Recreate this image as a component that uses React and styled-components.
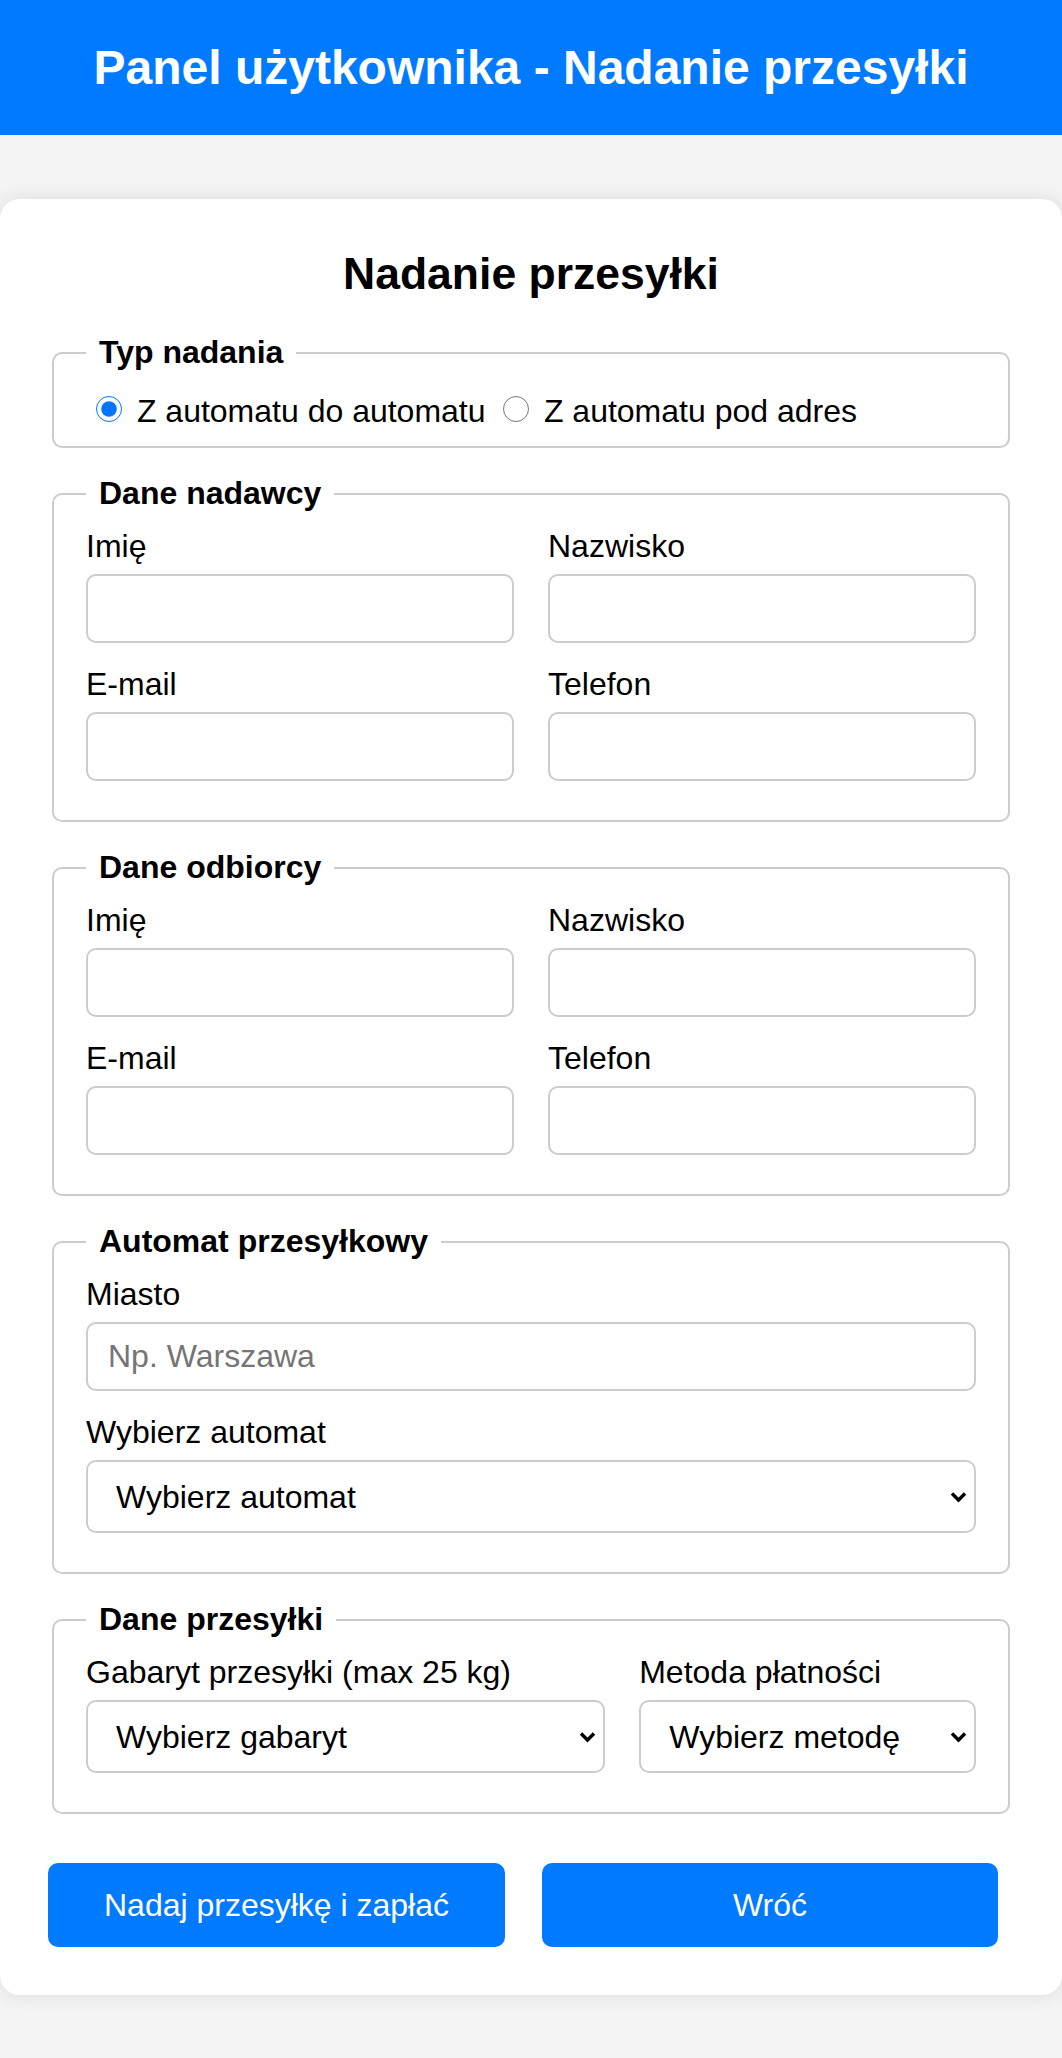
import React from 'react';
import styled, { createGlobalStyle } from 'styled-components';

const GlobalStyle = createGlobalStyle`
  * {
    box-sizing: border-box;
  }

  body {
    margin: 0;
    background: #f4f4f4;
    font-family: 'Liberation Sans', Arial, sans-serif;
    color: #000;
  }
`;

const Header = styled.header`
  background: #007bff;
  color: #fff;
  padding: 40px 0;
  text-align: center;
`;

const HeaderTitle = styled.h1`
  margin: 0;
  font-size: 48px;
  font-weight: bold;
`;

const Card = styled.main`
  margin: 64px 0 65px;
  background: #fff;
  border-radius: 20px;
  box-shadow: 0 0 20px rgba(0, 0, 0, 0.1);
  padding: 50px 52px 48px;
`;

const CardTitle = styled.h2`
  margin: 0 0 35px;
  font-size: 44.5px;
  font-weight: bold;
  text-align: center;
`;

const Fieldset = styled.fieldset`
  margin: 0 0 27px;
  padding: 16px 32px 16px;
  border: 2px solid #ccc;
  border-radius: 10px;
  min-width: 0;
`;

const Legend = styled.legend`
  padding: 0 13px;
  font-size: 32px;
  font-weight: bold;
`;

const RadioLabel = styled.label`
  font-size: 32px;
  margin-right: 3px;
`;

const Radio = styled.input.attrs({ type: 'radio' })`
  width: 26px;
  height: 26px;
  margin: 9px 6px 0 10px;
`;

const Grid = styled.div`
  display: grid;
  grid-template-columns: ${props => props.columns || '1fr 1fr'};
  column-gap: 34px;
`;

const Group = styled.div`
  margin-bottom: 23px;
  min-width: 0;
`;

const Label = styled.label`
  display: block;
  font-size: 32px;
  margin-bottom: 9px;
`;

const Input = styled.input`
  display: block;
  width: 100%;
  height: 69px;
  padding: 14px 20px;
  border: 2px solid #ccc;
  border-radius: 10px;
  font-family: inherit;
  font-size: 32px;
  color: #000;
  background: #fff;

  &::placeholder {
    color: #757575;
  }
`;

const SelectWrap = styled.div`
  position: relative;
`;

const Select = styled.select`
  display: block;
  width: 100%;
  height: 73px;
  padding: 14px 40px 14px 28px;
  border: 2px solid #ccc;
  border-radius: 10px;
  font-family: inherit;
  font-size: 32px;
  color: #000;
  background: #fff;
  appearance: none;
  -webkit-appearance: none;
`;

const Chevron = styled.svg`
  position: absolute;
  right: 9px;
  top: 50%;
  width: 17px;
  height: 12px;
  margin-top: -6px;
  pointer-events: none;
`;

const ButtonRow = styled.div`
  display: grid;
  grid-template-columns: 457px 456px;
  column-gap: 37px;
  margin: 49px 0 0 -4px;
`;

const Button = styled.button`
  height: 84px;
  border: none;
  border-radius: 10px;
  background: #007bff;
  color: #fff;
  font-family: inherit;
  font-size: 32px;
  cursor: pointer;
`;

const Dropdown = ({ id, children }) => (
  <SelectWrap>
    <Select id={id} defaultValue="">
      {children}
    </Select>
    <Chevron viewBox="0 0 17 12" aria-hidden="true">
      <path d="M2 2.5 L8.5 9 L15 2.5" fill="none" stroke="#000" strokeWidth="3.4" />
    </Chevron>
  </SelectWrap>
);

const PersonFields = ({ legend, prefix }) => (
  <Fieldset>
    <Legend>{legend}</Legend>
    <Grid>
      <Group>
        <Label htmlFor={`${prefix}-imie`}>Imię</Label>
        <Input id={`${prefix}-imie`} type="text" />
      </Group>
      <Group>
        <Label htmlFor={`${prefix}-nazwisko`}>Nazwisko</Label>
        <Input id={`${prefix}-nazwisko`} type="text" />
      </Group>
      <Group>
        <Label htmlFor={`${prefix}-email`}>E-mail</Label>
        <Input id={`${prefix}-email`} type="email" />
      </Group>
      <Group>
        <Label htmlFor={`${prefix}-telefon`}>Telefon</Label>
        <Input id={`${prefix}-telefon`} type="tel" />
      </Group>
    </Grid>
  </Fieldset>
);

export default function App() {
  return (
    <>
      <GlobalStyle />
      <Header>
        <HeaderTitle>Panel użytkownika - Nadanie przesyłki</HeaderTitle>
      </Header>
      <Card>
        <CardTitle>Nadanie przesyłki</CardTitle>
        <form onSubmit={e => e.preventDefault()}>
          <Fieldset>
            <Legend>Typ nadania</Legend>
            <RadioLabel>
              <Radio name="typ" value="automat" defaultChecked /> Z automatu do automatu
            </RadioLabel>{' '}
            <RadioLabel>
              <Radio name="typ" value="adres" /> Z automatu pod adres
            </RadioLabel>
          </Fieldset>

          <PersonFields legend="Dane nadawcy" prefix="nadawca" />
          <PersonFields legend="Dane odbiorcy" prefix="odbiorca" />

          <Fieldset>
            <Legend>Automat przesyłkowy</Legend>
            <Group>
              <Label htmlFor="miasto">Miasto</Label>
              <Input id="miasto" type="text" placeholder="Np. Warszawa" />
            </Group>
            <Group>
              <Label htmlFor="automat">Wybierz automat</Label>
              <Dropdown id="automat">
                <option value="">Wybierz automat</option>
              </Dropdown>
            </Group>
          </Fieldset>

          <Fieldset>
            <Legend>Dane przesyłki</Legend>
            <Grid columns="518fr 336fr">
              <Group>
                <Label htmlFor="gabaryt">Gabaryt przesyłki (max 25 kg)</Label>
                <Dropdown id="gabaryt">
                  <option value="">Wybierz gabaryt</option>
                  <option value="A">Gabaryt A</option>
                  <option value="B">Gabaryt B</option>
                  <option value="C">Gabaryt C</option>
                </Dropdown>
              </Group>
              <Group>
                <Label htmlFor="platnosc">Metoda płatności</Label>
                <Dropdown id="platnosc">
                  <option value="">Wybierz metodę</option>
                  <option value="blik">BLIK</option>
                  <option value="karta">Karta płatnicza</option>
                </Dropdown>
              </Group>
            </Grid>
          </Fieldset>

          <ButtonRow>
            <Button type="submit">Nadaj przesyłkę i zapłać</Button>
            <Button type="button">Wróć</Button>
          </ButtonRow>
        </form>
      </Card>
    </>
  );
}
